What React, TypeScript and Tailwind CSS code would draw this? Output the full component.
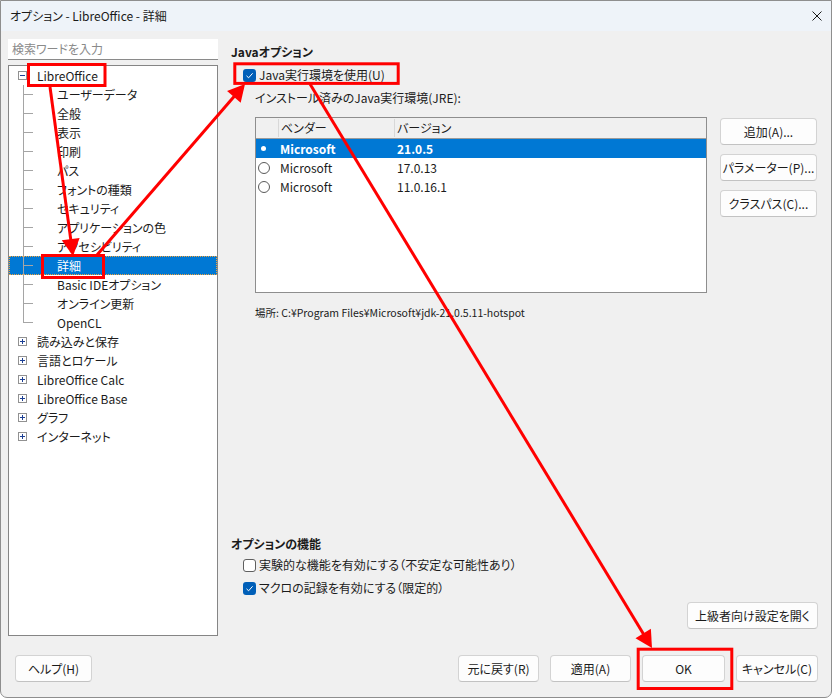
import React from 'react';

type TreeNode = {
  label: string;
  depth: 0 | 1;
  expander?: 'plus' | 'minus';
  last?: boolean;
  selected?: boolean;
};

const tree: TreeNode[] = [
  { label: 'LibreOffice', depth: 0, expander: 'minus' },
  { label: 'ユーザーデータ', depth: 1 },
  { label: '全般', depth: 1 },
  { label: '表示', depth: 1 },
  { label: '印刷', depth: 1 },
  { label: 'パス', depth: 1 },
  { label: 'フォントの種類', depth: 1 },
  { label: 'セキュリティ', depth: 1 },
  { label: 'アプリケーションの色', depth: 1 },
  { label: 'アクセシビリティ', depth: 1 },
  { label: '詳細', depth: 1, selected: true },
  { label: 'Basic IDEオプション', depth: 1 },
  { label: 'オンライン更新', depth: 1 },
  { label: 'OpenCL', depth: 1, last: true },
  { label: '読み込みと保存', depth: 0, expander: 'plus' },
  { label: '言語とロケール', depth: 0, expander: 'plus' },
  { label: 'LibreOffice Calc', depth: 0, expander: 'plus' },
  { label: 'LibreOffice Base', depth: 0, expander: 'plus' },
  { label: 'グラフ', depth: 0, expander: 'plus' },
  { label: 'インターネット', depth: 0, expander: 'plus' },
];

const runtimes = [
  { vendor: 'Microsoft', version: '21.0.5', selected: true },
  { vendor: 'Microsoft', version: '17.0.13' },
  { vendor: 'Microsoft', version: '11.0.16.1' },
];

function Expander({ kind }: { kind: 'plus' | 'minus' }) {
  return (
    <svg width="9" height="9" viewBox="0 0 9 9" className="shrink-0">
      <rect x="0.5" y="0.5" width="8" height="8" fill="#fff" stroke="#919191" />
      <line x1="2" y1="4.5" x2="7" y2="4.5" stroke="#1c3f94" />
      {kind === 'plus' && <line x1="4.5" y1="2" x2="4.5" y2="7" stroke="#1c3f94" />}
    </svg>
  );
}

function Checkbox({ checked }: { checked?: boolean }) {
  if (!checked) {
    return <div className="w-[13px] h-[13px] shrink-0 rounded-[3px] border border-[#5f5f5f] bg-white" />;
  }
  return (
    <div className="w-[13px] h-[13px] shrink-0 rounded-[3px] bg-[#005fb8] flex items-center justify-center">
      <svg width="9" height="9" viewBox="0 0 9 9">
        <path d="M1.5 4.8 L3.6 6.8 L7.6 2.3" fill="none" stroke="#fff" strokeWidth="1" />
      </svg>
    </div>
  );
}

function Radio({ checked }: { checked?: boolean }) {
  if (checked) {
    return (
      <div className="w-[11px] h-[11px] flex items-center justify-center">
        <div className="w-[5px] h-[5px] rounded-full bg-white" />
      </div>
    );
  }
  return <div className="w-[12px] h-[12px] rounded-full border border-[#5a5a5a] bg-white" />;
}

function Button({ children, className = '' }: { children: React.ReactNode; className?: string }) {
  return (
    <div
      className={`h-[27px] rounded-[4px] border border-[#d3d3d3] border-b-[#c2c2c2] bg-[#fdfdfd] flex items-center justify-center text-[12px] text-[#1b1b1b] ${className}`}
    >
      {children}
    </div>
  );
}

function Arrow({ x1, y1, x2, y2 }: { x1: number; y1: number; x2: number; y2: number }) {
  const dx = x2 - x1;
  const dy = y2 - y1;
  const len = Math.hypot(dx, dy);
  const ux = dx / len;
  const uy = dy / len;
  const head = 17;
  const half = 9;
  const bx = x2 - ux * head;
  const by = y2 - uy * head;
  const points = `${x2},${y2} ${bx - uy * half},${by + ux * half} ${bx + uy * half},${by - ux * half}`;
  return (
    <g>
      <line x1={x1} y1={y1} x2={bx + ux * 2} y2={by + uy * 2} stroke="#ff0000" strokeWidth="3" />
      <polygon points={points} fill="#ff0000" />
    </g>
  );
}

function TreeRow({ node }: { node: TreeNode }) {
  const base = node.selected
    ? 'bg-[#0078d4] text-white outline outline-1 outline-dotted outline-[#f2a33a] -outline-offset-1'
    : 'text-[#1b1b1b]';
  if (node.depth === 0) {
    return (
      <div className={`h-[19px] flex items-center pl-[9px] ${base}`}>
        {node.expander && <Expander kind={node.expander} />}
        <span className="ml-[10px] whitespace-nowrap">{node.label}</span>
      </div>
    );
  }
  return (
    <div className={`h-[19px] flex items-stretch pl-[14px] ${base}`}>
      <div className="w-[10px] flex flex-col">
        <div className="flex-1 border-l border-[#a5a5a5]" />
        <div className={`flex-1 border-t border-[#a5a5a5] ${node.last ? '' : 'border-l'}`} />
      </div>
      <span className="ml-[24px] self-center whitespace-nowrap">{node.label}</span>
    </div>
  );
}

export default function App() {
  return (
    <div className="relative w-[834px] h-[698px] bg-white font-['Noto_Sans_CJK_JP',sans-serif] [font-feature-settings:'palt'] text-[12px] text-[#1b1b1b] overflow-hidden">
      <div className="w-[832px] h-[698px] border border-[#8e8e8e] rounded-b-[7px] bg-[#f0f0f0] flex flex-col overflow-hidden">
        {/* title bar */}
        <div className="h-[30px] shrink-0 bg-[#eef3f9] flex items-center pl-[9px] pr-[8px]">
          <span className="text-[12px] text-[#1a1a1a]">オプション - LibreOffice - 詳細</span>
          <svg width="10" height="10" viewBox="0 0 10 10" className="ml-auto mr-[1px]">
            <path d="M0.5 0.5 L9.5 9.5 M9.5 0.5 L0.5 9.5" stroke="#1a1a1a" strokeWidth="1" />
          </svg>
        </div>

        <div className="h-[605px] shrink-0 flex">
          {/* category tree */}
          <div className="w-[217px] pl-[7px] pt-[8px] flex flex-col shrink-0">
            <div className="h-[21px] w-[210px] bg-white border-b border-[#8a8a8a] flex items-center pl-[4px] text-[#8a8a8a]">
              検索ワードを入力
            </div>
            <div className="mt-[5px] h-[571px] w-[210px] bg-white border border-[#858585]">
              {tree.map((node) => (
                <TreeRow key={node.label} node={node} />
              ))}
            </div>
          </div>

          {/* Java options page */}
          <div className="flex-1 pl-[13px] pr-[13px] pt-[13px] flex flex-col">
            <div className="h-[16px] leading-[16px] font-bold">Javaオプション</div>
            <div className="mt-[7px] h-[16px] flex items-center pl-[12px] gap-[3px]">
              <Checkbox checked />
              <span>Java実行環境を使用(U)</span>
            </div>
            <div className="mt-[7px] h-[16px] leading-[16px] pl-[24px]">インストール済みのJava実行環境(JRE):</div>

            <div className="mt-[11px] pl-[24px] flex gap-[13px]">
              <div className="w-[452px] h-[176px] border border-[#8e8e8e] bg-white flex flex-col">
                <div className="h-[21px] shrink-0 flex bg-[#f0f0f0] border-b border-[#9a9a9a]">
                  <div className="w-[22px]" />
                  <div className="w-[116px] my-[1px] border-l border-[#d8d8d8] pl-[2px] flex items-center">ベンダー</div>
                  <div className="flex-1 my-[1px] border-l border-[#d8d8d8] pl-[2px] flex items-center">バージョン</div>
                </div>
                {runtimes.map((r) => (
                  <div
                    key={r.version}
                    className={`h-[19px] flex items-center ${r.selected ? 'bg-[#0078d4] text-white font-semibold' : ''}`}
                  >
                    <div className="w-[22px] pl-[2px] flex items-center">
                      <Radio checked={r.selected} />
                    </div>
                    <div className="w-[116px] pl-[2px]">{r.vendor}</div>
                    <div className="flex-1 pl-[3px]">{r.version}</div>
                  </div>
                ))}
              </div>
              <div className="w-[97px] flex flex-col gap-[9px] pt-[1px]">
                <Button>追加(A)...</Button>
                <Button>パラメーター(P)...</Button>
                <Button>クラスパス(C)...</Button>
              </div>
            </div>

            <div className="mt-[12px] pl-[24px] h-[16px] leading-[16px] text-[10.5px] whitespace-nowrap">
              場所: C:¥Program Files¥Microsoft¥jdk-21.0.5.11-hotspot
            </div>

            <div className="mt-[215px] h-[16px] leading-[16px] font-bold">オプションの機能</div>
            <div className="mt-[5px] h-[16px] flex items-center pl-[12px] gap-[3px]">
              <Checkbox />
              <span>実験的な機能を有効にする（不安定な可能性あり）</span>
            </div>
            <div className="mt-[7px] h-[16px] flex items-center pl-[12px] gap-[3px]">
              <Checkbox checked />
              <span>マクロの記録を有効にする（限定的）</span>
            </div>
            <div className="mt-[6px] flex justify-end">
              <Button className="w-[131px]">上級者向け設定を開く</Button>
            </div>
          </div>
        </div>

        {/* dialog buttons */}
        <div className="pt-[19px] pl-[14px] pr-[13px] flex items-center">
          <Button className="w-[77px]">ヘルプ(H)</Button>
          <div className="ml-auto flex gap-[11px]">
            <Button className="w-[81px]">元に戻す(R)</Button>
            <Button className="w-[81px]">適用(A)</Button>
            <Button className="w-[83px] border-[#005fb8] border-b-[#005fb8]">OK</Button>
            <Button className="w-[82px]">キャンセル(C)</Button>
          </div>
        </div>
      </div>

      {/* red callouts */}
      <svg className="absolute inset-0 pointer-events-none" width="834" height="698" viewBox="0 0 834 698">
        <rect x="28.5" y="64.5" width="76.5" height="21" fill="none" stroke="#ff0000" strokeWidth="3" />
        <rect x="42.5" y="255.5" width="61" height="22" fill="none" stroke="#ff0000" strokeWidth="3" />
        <rect x="234.8" y="63.8" width="163.4" height="19.6" fill="none" stroke="#ff0000" strokeWidth="3" />
        <rect x="638.2" y="649.2" width="93.6" height="39.3" fill="none" stroke="#ff0000" strokeWidth="3" />
        <Arrow x1={50} y1={87} x2={73} y2={256} />
        <Arrow x1={97} y1={255} x2={245} y2={84} />
        <Arrow x1={310} y1={84} x2={652} y2={648} />
      </svg>
    </div>
  );
}
